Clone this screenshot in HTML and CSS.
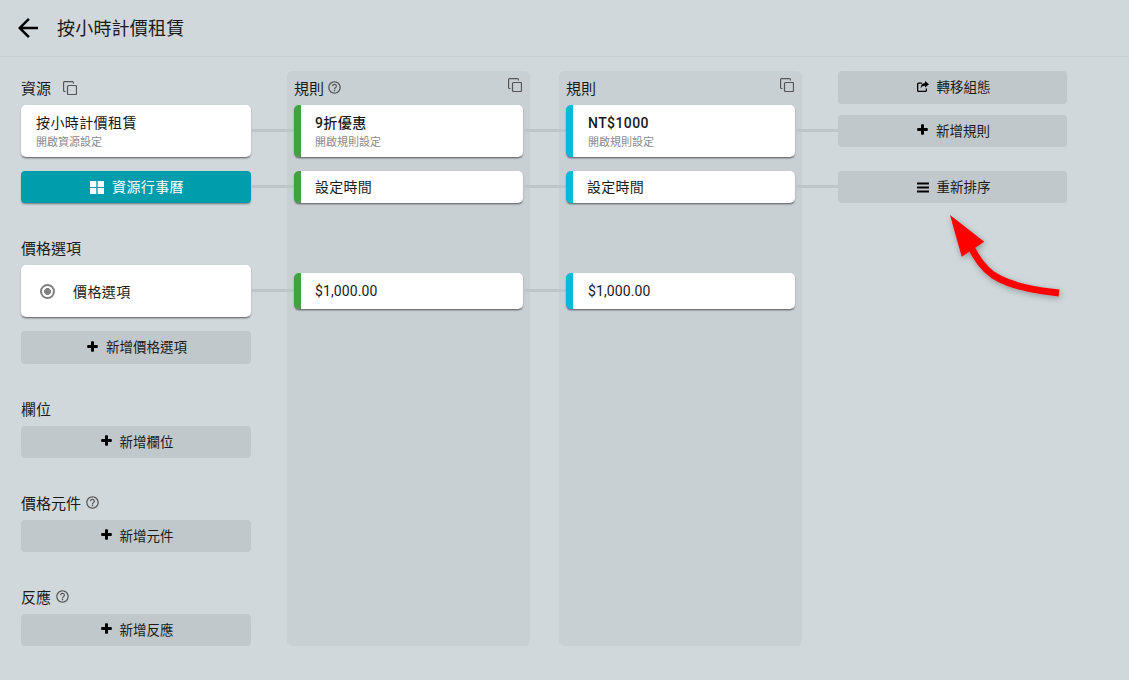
FILE: index.html
```html
<!DOCTYPE html>
<html lang="zh-Hant">
<head>
    <meta charset="UTF-8">
    <meta name="viewport" content="width=device-width, initial-scale=1.0">
    <title>按小時計價租賃</title>
    <link rel="stylesheet" href="styles.css">
</head>
<body>
    <svg class="icon-defs" aria-hidden="true">
        <symbol id="i-copy" viewBox="0 0 14 14">
            <rect x="4.500" y="4.500" width="9" height="9" rx="1" fill="none" stroke="currentColor" stroke-width="1.200"/>
            <path d="M2.500 10.500H1.600a1 1 0 0 1-1-1V1.600a1 1 0 0 1 1-1h7.800a1 1 0 0 1 1 1v.9" fill="none" stroke="currentColor" stroke-width="1.200"/>
        </symbol>
        <symbol id="i-help" viewBox="0 0 24 24">
            <path fill="currentColor" d="M11 18h2v-2h-2v2zm1-16C6.480 2 2 6.480 2 12s4.480 10 10 10 10-4.480 10-10S17.520 2 12 2zm0 18c-4.410 0-8-3.590-8-8s3.590-8 8-8 8 3.590 8 8-3.590 8-8 8zm0-14c-2.210 0-4 1.790-4 4h2c0-1.100.9-2 2-2s2 .9 2 2c0 2-3 1.750-3 5h2c0-2.250 3-2.500 3-5 0-2.210-1.790-4-4-4z"/>
        </symbol>
        <symbol id="i-plus" viewBox="0 0 11 11">
            <path fill="currentColor" d="M4 1a.8.8 0 0 1 .8-.8h1.400A.8.8 0 0 1 7 1v3h3a.8.8 0 0 1 .8.8v1.400A.8.8 0 0 1 10 7H7v3a.8.8 0 0 1-.8.8H4.800A.8.8 0 0 1 4 10V7H1a.8.8 0 0 1-.8-.8V4.800A.8.8 0 0 1 1 4h3z"/>
        </symbol>
        <symbol id="i-bars" viewBox="0 0 12 10">
            <path fill="currentColor" d="M0 0h12v2H0zM0 4h12v2H0zM0 8h12v2H0z"/>
        </symbol>
        <symbol id="i-share" viewBox="0 0 12 11">
            <path fill="currentColor" d="M1.500 1.500H5v1.300H1.800a.5.5 0 0 0-.5.5v5.900a.5.5 0 0 0 .5.5h6.400a.5.5 0 0 0 .5-.5V7.500H10v2a1.500 1.500 0 0 1-1.500 1.500h-7A1.500 1.500 0 0 1 0 9.500V3a1.500 1.500 0 0 1 1.500-1.500z"/>
            <path fill="currentColor" d="M8 0l4 3.300L8 6.600V4.700C5.800 4.700 4.500 5.400 3.700 7.500 3.400 4.500 5 2.300 8 2z"/>
        </symbol>
        <symbol id="i-grid" viewBox="0 0 14 13">
            <path fill="currentColor" d="M0 0h6.300v5.900H0zM7.700 0H14v5.900H7.700zM0 7.100h6.300V13H0zM7.700 7.100H14V13H7.700z"/>
        </symbol>
    </svg>

    <!-- ヘッダー -->
    <header class="top-bar">
        <svg class="back-icon" viewBox="0 0 24 24"><path fill="currentColor" d="M20 11H7.830l5.590-5.590L12 4l-8 8 8 8 1.410-1.410L7.830 13H20v-2z"/></svg>
        <h1 class="page-title">按小時計價租賃</h1>
    </header>

    <main class="board">
        <!-- 資源 -->
        <div class="side-col">
            <section class="group">
                <div class="group-title">資源 <svg class="copy-icon copy-inline"><use href="#i-copy"/></svg></div>
                <div class="card card-linked">
                    <div class="card-name">按小時計價租賃</div>
                    <div class="card-sub">開啟資源設定</div>
                </div>
                <button class="btn btn-teal btn-linked"><svg class="btn-icon grid-icon"><use href="#i-grid"/></svg>資源行事曆</button>
            </section>

            <section class="group">
                <div class="group-title">價格選項</div>
                <div class="card card-linked card-option">
                    <span class="radio-mark"></span>
                    <span class="option-name">價格選項</span>
                </div>
                <button class="btn btn-tall"><svg class="btn-icon"><use href="#i-plus"/></svg>新增價格選項</button>
            </section>

            <section class="group">
                <div class="group-title">欄位</div>
                <button class="btn"><svg class="btn-icon"><use href="#i-plus"/></svg>新增欄位</button>
            </section>

            <section class="group">
                <div class="group-title">價格元件 <svg class="help-icon"><use href="#i-help"/></svg></div>
                <button class="btn"><svg class="btn-icon"><use href="#i-plus"/></svg>新增元件</button>
            </section>

            <section class="group">
                <div class="group-title">反應 <svg class="help-icon"><use href="#i-help"/></svg></div>
                <button class="btn"><svg class="btn-icon"><use href="#i-plus"/></svg>新增反應</button>
            </section>
        </div>

        <!-- 規則 -->
        <div class="rule-col">
            <div class="rule-head">
                <div class="rule-title">規則 <svg class="help-icon"><use href="#i-help"/></svg></div>
                <svg class="copy-icon"><use href="#i-copy"/></svg>
            </div>
            <div class="card card-green card-linked">
                <div class="card-name strong">9折優惠</div>
                <div class="card-sub">開啟規則設定</div>
            </div>
            <div class="card card-green card-linked card-short">設定時間</div>
            <div class="card card-green card-linked card-price">$1,000.00</div>
        </div>

        <div class="rule-col rule-col-second">
            <div class="rule-head">
                <div class="rule-title">規則</div>
                <svg class="copy-icon"><use href="#i-copy"/></svg>
            </div>
            <div class="card card-cyan card-linked">
                <div class="card-name strong">NT$1000</div>
                <div class="card-sub">開啟規則設定</div>
            </div>
            <div class="card card-cyan card-linked card-short">設定時間</div>
            <div class="card card-cyan card-price">$1,000.00</div>
        </div>

        <!-- 操作ボタン -->
        <div class="action-col">
            <button class="btn btn-tall"><svg class="btn-icon btn-icon-wide"><use href="#i-share"/></svg>轉移組態</button>
            <button class="btn btn-add-rule"><svg class="btn-icon"><use href="#i-plus"/></svg>新增規則</button>
            <button class="btn btn-reorder"><svg class="btn-icon btn-icon-wide bars-icon"><use href="#i-bars"/></svg>重新排序</button>
        </div>
    </main>

    <!-- 注釈の矢印 -->
    <svg class="red-arrow" width="1129" height="680" viewBox="0 0 1129 680">
        <path d="M1059 293C1030 290 1008 285 993 275 983 268 976 258 970 245" fill="none" stroke="#f00" stroke-width="7"/>
        <polygon points="950,215 961.700,256.700 984.300,241.700" fill="#f00"/>
    </svg>
</body>
</html>
```

FILE: styles.css
```css
* {
    box-sizing: border-box;
}

body {
    margin: 0;
    height: 680px;
    overflow: hidden;
    position: relative;
    background-color: #d0d8db;
    color: #1a1a1a;
    font-family: Roboto, "Noto Sans CJK TC", sans-serif;
    font-size: 14px;
}

.icon-defs {
    display: none;
}

/* ヘッダー */
.top-bar {
    height: 57px;
    display: flex;
    align-items: center;
    gap: 14px;
    padding-left: 13px;
    border-bottom: 1px solid #c6cfd2;
}

.back-icon {
    width: 30px;
    height: 30px;
    color: #000;
}

.page-title {
    margin: 0 0 2px;
    font-size: 18px;
    font-weight: 400;
    letter-spacing: .2px;
}

.board {
    display: flex;
    align-items: flex-start;
    padding: 14px 0 0 21px;
}

/* 左カラム */
.side-col {
    width: 230px;
    margin-right: 36px;
}

.group {
    display: flex;
    flex-direction: column;
    margin-bottom: 28px;
}

.group-title {
    height: 34px;
    display: flex;
    align-items: center;
    gap: 4px;
    padding-bottom: 2px;
    font-size: 15px;
}

.copy-icon {
    width: 14px;
    height: 14px;
    margin-right: 1px;
    color: #555;
}

.copy-inline {
    margin-left: 8px;
    margin-top: 2px;
}

.help-icon {
    width: 15px;
    height: 15px;
    color: #555;
}

/* カード */
.card {
    position: relative;
    background-color: #fff;
    border-radius: 5px;
    padding: 10px 15px 0;
    height: 52px;
    margin-bottom: 14px;
    letter-spacing: .4px;
    box-shadow: 0 2px 2px -1px rgba(0, 0, 0, .45), 0 1px 2px rgba(0, 0, 0, .2);
}

.card-linked::after {
    content: "";
    position: absolute;
    top: calc(50% - 2px);
    left: 100%;
    width: 43px;
    height: 3px;
    background-color: #bdc6c9;
}

.card-name {
    line-height: 17px;
}

.strong {
    font-weight: 500;
}

.card-sub {
    margin-top: 4px;
    font-size: 11px;
    line-height: 14px;
    letter-spacing: 0;
    color: #8a8a8a;
}

.card-option {
    display: flex;
    align-items: center;
    padding: 0 15px 0 19px;
}

.radio-mark {
    width: 15px;
    height: 15px;
    border: 2px solid #808080;
    border-radius: 50%;
    background: radial-gradient(circle, #808080 0 3.200px, transparent 3.700px);
}

.option-name {
    margin-left: 18px;
}

.card-green,
.card-cyan {
    padding-left: 14px;
    border-left: 7px solid #43a047;
}

.card-cyan {
    border-left-color: #00bcd4;
    padding-left: 15px;
}

.card-short {
    height: 32px;
    margin-bottom: 70px;
    padding-top: 0;
    padding-left: 14px;
    line-height: 33px;
    letter-spacing: .25px;
}

.card-price {
    height: 36px;
    margin-bottom: 0;
    padding-top: 0;
    line-height: 36px;
    letter-spacing: .1px;
}

/* ボタン */
.btn {
    position: relative;
    width: 100%;
    height: 32px;
    display: flex;
    align-items: center;
    justify-content: center;
    padding: 0 0 3px 2px;
    border: none;
    border-radius: 4px;
    background-color: #c0c8cb;
    color: #1a1a1a;
    font-family: inherit;
    font-size: 13.500px;
    cursor: pointer;
}

.btn-tall {
    height: 33px;
}

.btn-icon {
    width: 11px;
    height: 11px;
    margin-right: 8px;
    color: #000;
}

.btn-icon-wide {
    width: 12px;
}

.bars-icon {
    margin-top: 3px;
}

.btn-teal {
    background-color: #009ead;
    color: #fff;
    font-size: 14px;
    letter-spacing: .4px;
    box-shadow: 0 2px 2px -1px rgba(0, 0, 0, .35), 0 1px 2px rgba(0, 0, 0, .15);
}

.btn-linked::after {
    content: "";
    position: absolute;
    top: calc(50% - 2px);
    left: 100%;
    width: 43px;
    height: 3px;
    background-color: #bdc6c9;
}

.grid-icon {
    width: 14px;
    height: 13px;
    margin-top: 3px;
    margin-right: 8px;
    color: #fff;
}

/* 規則カラム */
.rule-col {
    width: 243px;
    height: 575px;
    margin-right: 29px;
    padding: 0 7px;
    border-radius: 5px;
    background-color: #c8d0d3;
}

.rule-col-second {
    margin-right: 36px;
}

.rule-head {
    height: 34px;
    display: flex;
    justify-content: space-between;
    padding-top: 7px;
}

.rule-title {
    display: flex;
    align-items: center;
    align-self: flex-start;
    gap: 3px;
    height: 19px;
    font-size: 15px;
}

/* 操作カラム */
.action-col {
    width: 229px;
    display: flex;
    flex-direction: column;
}

.btn-add-rule {
    margin-top: 11px;
}

.btn-reorder {
    margin-top: 24px;
}

/* 注釈の矢印 */
.red-arrow {
    position: absolute;
    top: 0;
    left: 0;
    pointer-events: none;
    filter: drop-shadow(1px 2px 3px rgba(0, 0, 0, .3));
}
```
